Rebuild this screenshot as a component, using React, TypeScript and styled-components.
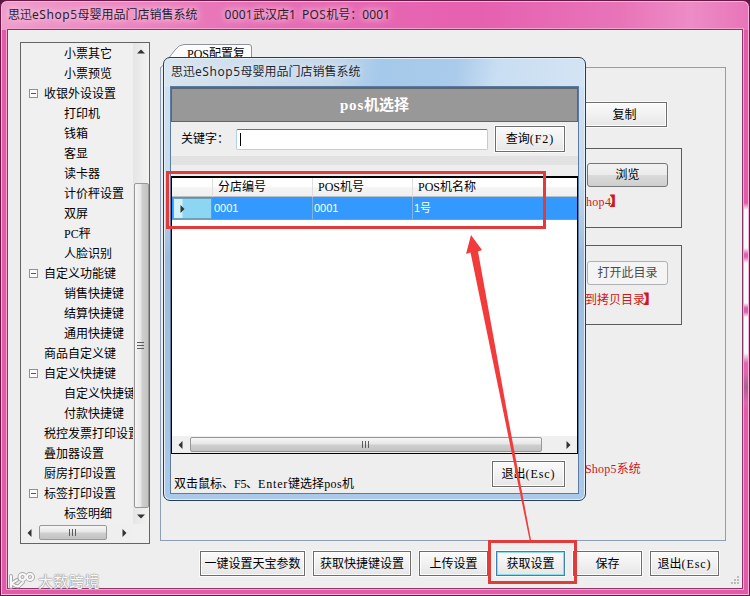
import React from "react";
import styled, { createGlobalStyle } from "styled-components";

const Global = createGlobalStyle`
  * { box-sizing: border-box; }
  html, body { margin: 0; padding: 0; overflow: hidden; }
  body {
    font: 12px/20px "Liberation Serif", "Noto Sans CJK SC", sans-serif;
    color: #000;
    background: #5d1440;
  }
`;

const cjk = `"Noto Sans CJK SC", sans-serif`;

const Window = styled.div`
  position: relative;
  width: 750px;
  height: 596px;
  padding: 0 6px 6px;
  overflow: hidden;
  border: 1px solid #6b1748;
  border-radius: 7px 7px 0 0;
  box-shadow: inset 0 0 0 1px #f7b5da;
  background:
    linear-gradient(180deg, transparent 0 202px, #f3fbfb 209px 247px, #d963ad 253px 256px, #f3fbfb 262px 302px, #d963ad 307px 311px, #f3fbfb 316px 352px, #e066b2 362px 372px, #a9608f 386px, #e066b2 402px, transparent 410px) right 1px top 0 / 6px 100% no-repeat,
    linear-gradient(90deg, #ef9ccb 0, #ec86c0 120px, #e66eb4 260px, #e660b0 480px, #e874b8 620px, #ed8cc6 690px, #e873b8 750px) 0 0 / 100% 29px no-repeat,
    #e25aaa;
`;

const TitleBar = styled.header`
  display: flex;
  height: 28px;
  padding: 4px 0 0 1px;
  gap: 27px;
  font: 12px/20px "Noto Sans", ${cjk};
  color: #2b1c2e;
  white-space: pre;
  text-shadow: 0 0 6px #fbd3e8, 0 0 8px #fbd3e8;
`;

const Fit = styled.span<{ $ls?: number }>`
  letter-spacing: ${(p) => p.$ls ?? 0}px;
`;

const Client = styled.main`
  position: relative;
  height: 560px;
  padding: 12px 0 0 12px;
  border: 1px solid #8b3467;
  outline: 1px solid #f3a3d0;
  background: #eee;
`;

const Upper = styled.div`
  display: flex;
  gap: 10px;
  height: 502px;
`;

const Tree = styled.nav`
  display: grid;
  grid-template: 481px 19px / 112px 16px;
  width: 130px;
  border: 1px solid #646464;
  background: #f0f0f0;
`;

const TreeList = styled.ul`
  margin: 0;
  padding: 1px 0 0;
  overflow: hidden;
  list-style: none;
`;

const TreeItem = styled.li<{ $level: number }>`
  display: flex;
  align-items: center;
  height: 20px;
  padding-left: ${(p) => (p.$level === 2 ? 43 : 8)}px;
  white-space: nowrap;
  font-family: "Liberation Serif", ${cjk};
`;

const Toggle = styled.span<{ $shown: boolean }>`
  flex: none;
  width: 9px;
  height: 9px;
  margin: 0 6px 2px 0;
  border: 1px solid ${(p) => (p.$shown ? "#8d939b" : "transparent")};
  background: ${(p) => (p.$shown ? "linear-gradient(#46597c, #46597c) center / 5px 1px no-repeat, #fafafa" : "none")};
`;

const VBar = styled.div`
  display: flex;
  flex-direction: column;
  align-items: center;
  background: linear-gradient(90deg, #e5e5e5, #f2f2f2);
`;

const HBar = styled.div`
  display: flex;
  align-items: center;
  height: 17px;
  background: #efefef;
`;

const ArrowCell = styled.span<{ $w: number; $h: number }>`
  display: grid;
  place-items: center;
  flex: none;
  width: ${(p) => p.$w}px;
  height: ${(p) => p.$h}px;
`;

const Thumb = styled.span<{ $vertical?: boolean; $size: number }>`
  display: grid;
  place-items: center;
  flex: none;
  width: ${(p) => (p.$vertical ? "15px" : `${p.$size}px`)};
  height: ${(p) => (p.$vertical ? `${p.$size}px` : "15px")};
  border: 1px solid #989898;
  border-radius: 2px;
  background: linear-gradient(${(p) => (p.$vertical ? "90deg" : "180deg")}, #f6f6f6, #e6e6e6 48%, #cfcfcf 52%, #c3c3c3);
`;

const TabArea = styled.section`
  display: flex;
  flex-direction: column;
  width: 566px;
  padding-top: 2px;
`;

const Tab = styled.div`
  position: relative;
  width: 92px;
  height: 24px;
  margin-bottom: -1px;
`;

const TabShape = styled.svg`
  display: block;
`;

const TabLabel = styled.span`
  position: absolute;
  left: 27px;
  top: 0;
  white-space: nowrap;
`;

const Panel = styled.div`
  display: flex;
  flex-direction: column;
  height: 474px;
  padding: 34px 0 0 22px;
  border: 1px solid #8d9fb6;
`;

const button = `
  display: flex;
  align-items: center;
  justify-content: center;
  flex: none;
  padding: 0;
  font: 12px/16px "Liberation Serif", "Noto Sans CJK SC", sans-serif;
  white-space: nowrap;
`;

const Button = styled.button<{ $w: number; $h?: number; $focus?: boolean }>`
  ${button}
  width: ${(p) => p.$w}px;
  height: ${(p) => p.$h ?? 25}px;
  border: 1px solid ${(p) => (p.$focus ? "#3c7fb1" : "#6d6d6d")};
  box-shadow: ${(p) => (p.$focus ? "inset 0 0 0 1px #8fdcec, " : "inset 0 0 0 1px #fff, ")} 0 0 0 1px #fbfbfb;
  background: linear-gradient(#fafafa, #efefef 60%, #e6e6e6);
  color: #000;
`;

const RoundButton = styled.button<{ $disabled?: boolean }>`
  ${button}
  width: 81px;
  height: 24px;
  border: 1px solid ${(p) => (p.$disabled ? "#b0b2b5" : "#777")};
  border-radius: 3px;
  background: ${(p) => (p.$disabled ? "#f4f4f4" : "linear-gradient(#f2f2f2, #ebebeb 50%, #dadada 52%, #cfcfcf)")};
  color: ${(p) => (p.$disabled ? "#4b4b4b" : "#000")};
`;

const CopyRow = styled.div`
  display: flex;
  justify-content: flex-end;
  padding-right: 58px;
`;

const Group = styled.div<{ $top: number; $padTop: number }>`
  display: flex;
  flex-direction: column;
  align-items: flex-end;
  width: 499px;
  height: 80px;
  margin-top: ${(p) => p.$top}px;
  padding: ${(p) => p.$padTop}px 13px 0 0;
  border: 1px solid #5c5c5c;
`;

const Note = styled.p<{ $left: number; $top: number }>`
  align-self: flex-start;
  margin: ${(p) => p.$top}px 0 0 ${(p) => p.$left}px;
  line-height: 20px;
  color: #d11616;
  white-space: nowrap;
`;

const Bracket = styled.b`
  margin-left: -1px;
  font-weight: 900;
  -webkit-text-stroke: 1px #d11616;
`;

const Actions = styled.footer`
  display: flex;
  gap: 8px;
  margin: 7px 0 0 180px;
`;

const Dialog = styled.section`
  position: absolute;
  left: 162px;
  top: 56px;
  width: 423px;
  height: 444px;
  padding: 0 6px 6px;
  border: 1px solid #263d56;
  border-radius: 7px;
  box-shadow: inset 0 0 0 1px #e3f0fb;
  background:
    linear-gradient(100deg, #d9e5ef 0, #c3d7ea 170px, #a5c9eb 215px, #aacbea 290px, #c9def2 330px, #d3e4f4 100%) 0 0 / 100% 29px no-repeat,
    linear-gradient(#cfe2f3 0, #c7dcef 120px, #9dbcda 200px, #abc9e8 100%);
`;

const DialogTitle = styled.header`
  height: 28px;
  padding: 4px 0 0 1px;
  font: 12px/20px "Noto Sans", ${cjk};
  color: #1d2733;
  white-space: nowrap;
  text-shadow: 0 0 6px #eef4f9;
`;

const DialogBody = styled.div`
  display: flex;
  flex-direction: column;
  height: 408px;
  border: 1px solid #5b7ba0;
  background: #eee;
`;

const Banner = styled.h1`
  height: 35px;
  margin: 0;
  border: 1px solid #5c6670;
  border-top-width: 2px;
  background: #989898;
  color: #fff;
  font: bold 15px/32px "Liberation Serif", "Noto Sans CJK SC", sans-serif;
  text-align: center;
`;

const SearchRow = styled.div`
  display: flex;
  align-items: center;
  height: 34px;
  padding-left: 10px;
`;

const SearchLabel = styled.label`
  width: 55px;
`;

const SearchBox = styled.div`
  display: flex;
  align-items: center;
  width: 252px;
  height: 21px;
  margin-right: 7px;
  padding-left: 3px;
  border: 1px solid #b5cfe7;
  border-top-color: #3d7bad;
  border-radius: 2px;
  background: #fff;
`;

const Caret = styled.span`
  width: 1px;
  height: 13px;
  background: #000;
`;

const Band = styled.div`
  height: 9px;
  margin-bottom: 11px;
  background: #e2e2e2;
`;

const GridBox = styled.div`
  display: flex;
  flex-direction: column;
  height: 278px;
  border: 1px solid #000;
  border-top-width: 2px;
  background: #fff;
`;

const GridRow = styled.div<{ $head?: boolean }>`
  display: grid;
  grid-template-columns: 41px 100px 100px 1fr;
  height: ${(p) => (p.$head ? 19 : 23)}px;
  color: ${(p) => (p.$head ? "#000" : "#fff")};
  background: ${(p) => (p.$head ? "linear-gradient(#fff, #fff 45%, #f4f4f4 55%, #f0f0f0)" : "#3399ff")};
  border-bottom: 1px solid ${(p) => (p.$head ? "#b9c0c8" : "#5ba4e6")};
  line-height: ${(p) => (p.$head ? 19 : 22)}px;
`;

const Cell = styled.span<{ $head?: boolean; $last?: boolean }>`
  padding-left: ${(p) => (p.$head ? 5 : 1)}px;
  border-right: ${(p) => (p.$last ? 0 : 1)}px solid ${(p) => (p.$head ? "#dedede" : "#7fb2df")};
  font-family: ${(p) => (p.$head ? `"Liberation Serif"` : `"Liberation Sans"`)}, ${cjk};
  font-size: ${(p) => (p.$head ? 12 : 11)}px;
`;

const RowMarker = styled.span`
  display: flex;
  align-items: center;
  margin: 1px 1px 0 1px;
  padding-left: 4px;
  border: 1px solid #6f9fb4;
  background: linear-gradient(90deg, #d2f2fb 0 8px, #8cd6f3 9px);
`;

const Blank = styled.div`
  flex: 1;
`;

const DialogFoot = styled.div`
  display: flex;
  align-items: center;
  justify-content: space-between;
  height: 38px;
  padding: 1px 13px 0 3px;
`;

const FootHint = styled.span`
  padding-top: 20px;
  white-space: nowrap;
`;

const Annotations = styled.svg`
  position: absolute;
  left: -1px;
  top: -1px;
  pointer-events: none;
`;

const Watermark = styled.div`
  position: absolute;
  left: 7px;
  bottom: 5px;
  display: flex;
  align-items: center;
  gap: 3px;
  color: #f8f8f8;
  font: 15px/18px ${cjk};
  letter-spacing: 0.5px;
  text-shadow: 0 0 1px #888, 0 0 1px #999, 0 0 2px #aaa;
`;

const Grip = styled.svg`
  position: absolute;
  right: 2px;
  bottom: 2px;
`;

function Arrow({ dir }: { dir: "up" | "down" | "left" | "right" }) {
  const d = {
    up: "M0 5.5L4 1.5L8 5.5Z",
    down: "M0 2.5L8 2.5L4 6.5Z",
    left: "M5.5 0L1.5 4L5.5 8Z",
    right: "M2.5 0L6.5 4L2.5 8Z",
  }[dir];
  return (
    <svg width="8" height="8">
      <path d={d} fill="#333" />
    </svg>
  );
}

function Ridges({ vertical }: { vertical?: boolean }) {
  return (
    <svg width="8" height="8">
      <path d={vertical ? "M0 .5H7M0 3.5H7M0 6.5H7" : "M.5 0V7M3.5 0V7M6.5 0V7"} stroke="#5d5d5d" />
    </svg>
  );
}

type Node = { level: 1 | 2; text: string; open?: boolean };
const nodes: Node[] = [
  { level: 2, text: "小票其它" },
  { level: 2, text: "小票预览" },
  { level: 1, text: "收银外设设置", open: true },
  { level: 2, text: "打印机" },
  { level: 2, text: "钱箱" },
  { level: 2, text: "客显" },
  { level: 2, text: "读卡器" },
  { level: 2, text: "计价秤设置" },
  { level: 2, text: "双屏" },
  { level: 2, text: "PC秤" },
  { level: 2, text: "人脸识别" },
  { level: 1, text: "自定义功能键", open: true },
  { level: 2, text: "销售快捷键" },
  { level: 2, text: "结算快捷键" },
  { level: 2, text: "通用快捷键" },
  { level: 1, text: "商品自定义键" },
  { level: 1, text: "自定义快捷键", open: true },
  { level: 2, text: "自定义快捷键" },
  { level: 2, text: "付款快捷键" },
  { level: 1, text: "税控发票打印设置" },
  { level: 1, text: "叠加器设置" },
  { level: 1, text: "厨房打印设置" },
  { level: 1, text: "标签打印设置", open: true },
  { level: 2, text: "标签明细" },
];

export default function App() {
  return (
    <>
      <Global />
      <Window>
        <TitleBar>
          <span>思迅<Fit $ls={0.55}>eShop5</Fit>母婴用品门店销售系统</span>
          <span>
            <Fit $ls={0.2}>0001</Fit>武汉店1{"  "}<Fit $ls={0.3}>POS</Fit>机号：<Fit $ls={0.2}>0001</Fit>
          </span>
        </TitleBar>
        <Client>
          <Upper>
            <Tree>
              <TreeList>
                {nodes.map((n, i) => (
                  <TreeItem key={i} $level={n.level}>
                    {n.level === 1 && <Toggle $shown={!!n.open} />}
                    {n.text}
                  </TreeItem>
                ))}
              </TreeList>
              <VBar>
                <ArrowCell $w={15} $h={17}><Arrow dir="up" /></ArrowCell>
                <Blank />
                <Thumb $vertical $size={325}><Ridges vertical /></Thumb>
                <ArrowCell $w={15} $h={16}><Arrow dir="down" /></ArrowCell>
              </VBar>
              <HBar>
                <ArrowCell $w={18} $h={17}><Arrow dir="left" /></ArrowCell>
                <Thumb $size={68}><Ridges /></Thumb>
                <Blank />
                <ArrowCell $w={18} $h={17}><Arrow dir="right" /></ArrowCell>
              </HBar>
            </Tree>
            <TabArea>
              <Tab>
                <TabShape width="92" height="24">
                  <path d="M.5 24C5 20 10 12 15 6Q19 .5 24 .5H89Q91.5 .5 91.5 3V24" fill="#fcfcfc" stroke="#8d939c" />
                </TabShape>
                <TabLabel>POS配置复</TabLabel>
              </Tab>
              <Panel>
                <CopyRow><Button $w={85}>复制</Button></CopyRow>
                <Group $top={21} $padTop={14}>
                  <RoundButton>浏览</RoundButton>
                  <Note $left={402} $top={5}><Fit $ls={0.3}>hop4</Fit><Bracket>】</Bracket></Note>
                </Group>
                <Group $top={17} $padTop={15}>
                  <RoundButton $disabled>打开此目录</RoundButton>
                  <Note $left={401} $top={5}>到拷贝目录<Bracket>】</Bracket></Note>
                </Group>
                <Note $left={402} $top={134}><Fit $ls={0.2}>Shop5</Fit>系统</Note>
              </Panel>
            </TabArea>
          </Upper>
          <Actions>
            <Button $w={105}>一键设置天宝参数</Button>
            <Button $w={98}>获取快捷键设置</Button>
            <Button $w={69}>上传设置</Button>
            <Button $w={69} $focus>获取设置</Button>
            <Button $w={69}>保存</Button>
            <Button $w={69}><span>退出<Fit $ls={0.9}>(Esc)</Fit></span></Button>
          </Actions>
          <Grip width="12" height="12">
            <path d="M9 2h2v2h-2zM6 5h2v2h-2zM9 5h2v2h-2zM3 8h2v2h-2zM6 8h2v2h-2zM9 8h2v2h-2z" fill="#bbb" />
          </Grip>
        </Client>

        <Dialog>
          <DialogTitle>思迅<Fit $ls={0.55}>eShop5</Fit>母婴用品门店销售系统</DialogTitle>
          <DialogBody>
            <Banner><Fit $ls={0.8}>pos</Fit>机选择</Banner>
            <SearchRow>
              <SearchLabel>关键字：</SearchLabel>
              <SearchBox><Caret /></SearchBox>
              <Button $w={70} $h={26}><span>查询<Fit $ls={0.9}>(F2)</Fit></span></Button>
            </SearchRow>
            <Band />
            <GridBox>
              <GridRow $head>
                <Cell $head />
                <Cell $head>分店编号</Cell>
                <Cell $head>POS机号</Cell>
                <Cell $head $last>POS机名称</Cell>
              </GridRow>
              <GridRow>
                <RowMarker><Arrow dir="right" /></RowMarker>
                <Cell>0001</Cell>
                <Cell>0001</Cell>
                <Cell $last>1号</Cell>
              </GridRow>
              <Blank />
              <HBar>
                <ArrowCell $w={18} $h={17}><Arrow dir="left" /></ArrowCell>
                <Thumb $size={352}><Ridges /></Thumb>
                <Blank />
                <ArrowCell $w={18} $h={17}><Arrow dir="right" /></ArrowCell>
              </HBar>
            </GridBox>
            <DialogFoot>
              <FootHint>
                双击鼠标、<Fit $ls={-0.3}>F5</Fit>、<Fit $ls={0.8}>Enter</Fit>键选择<Fit $ls={0.4}>pos</Fit>机
              </FootHint>
              <Button $w={73} $h={26}><span>退出<Fit $ls={0.9}>(Esc)</Fit></span></Button>
            </DialogFoot>
          </DialogBody>
        </Dialog>

        <Watermark>
          <svg width="27" height="18" fill="none" strokeLinecap="round">
            <g stroke="#aaa" strokeWidth="4">
              <path d="M3 4V15M9 8L4 11Q7 15 11 14L15 10" />
              <circle cx="14.5" cy="5" r="3" /><circle cx="22" cy="5" r="3" />
            </g>
            <g stroke="#f8f8f8" strokeWidth="2">
              <path d="M3 4V15M9 8L4 11Q7 15 11 14L15 10" />
              <circle cx="14.5" cy="5" r="3" /><circle cx="22" cy="5" r="3" />
            </g>
          </svg>
          <span>大数跨境</span>
        </Watermark>

        <Annotations width="750" height="596">
          <g fill="none" stroke="#e03c3c" strokeWidth="3">
            <rect x="167.5" y="172.5" width="377" height="55" />
            <rect x="489.5" y="541.5" width="86" height="41" />
          </g>
          <path d="M471 235L482 250L478 251.5L508.5 420L531.2 541H529.8L505 420L470.5 252.5L466 254Z" fill="#f23b3b" />
        </Annotations>
      </Window>
    </>
  );
}
